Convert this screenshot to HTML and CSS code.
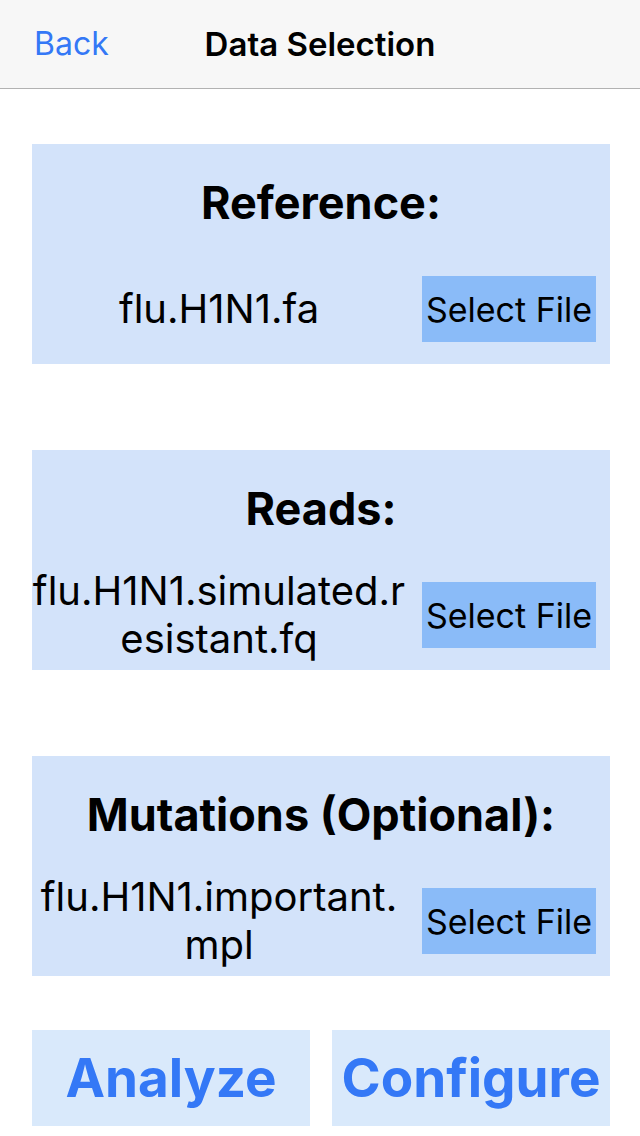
FILE: index.html
```html
<!DOCTYPE html>
<html>
<head>
<meta charset="utf-8">
<link rel="stylesheet" href="styles.css">
</head>
<body>
<div class="nav">
  <span class="back">Back</span>
  <span class="title">Data Selection</span>
</div>
<div class="content">
  <div class="panel">
    <div class="panel-title">Reference:</div>
    <div class="row">
      <div class="label">flu.H1N1.fa</div>
      <div class="select">Select File</div>
    </div>
  </div>
  <div class="panel">
    <div class="panel-title">Reads:</div>
    <div class="row">
      <div class="label">flu.H1N1.simulated.resistant.fq</div>
      <div class="select">Select File</div>
    </div>
  </div>
  <div class="panel">
    <div class="panel-title">Mutations (Optional):</div>
    <div class="row">
      <div class="label">flu.H1N1.important.mpl</div>
      <div class="select">Select File</div>
    </div>
  </div>
  <div class="actions">
    <div class="action">Analyze</div>
    <div class="action">Configure</div>
  </div>
</div>
</body>
</html>
```
FILE: styles.css
```css
html, body {
  margin: 0;
  padding: 0;
  background: #ffffff;
  font-family: Inter, "Noto Sans", sans-serif;
  color: #000;
}
.nav {
  height: 88px;
  background: #f7f7f7;
  border-bottom: 1px solid #b2b2b2;
  position: relative;
  display: flex;
  align-items: center;
  justify-content: center;
}
.back {
  position: absolute;
  left: 34px;
  top: 24px;
  font-size: 32px;
  color: #3478f6;
  line-height: 40px;
}
.title {
  font-size: 33px;
  font-weight: 600;
  line-height: 40px;
}
.content {
  padding: 55px 30px 0 32px;
  display: flex;
  flex-direction: column;
}
.panel {
  height: 220px;
  background: #d3e3fa;
  display: flex;
  flex-direction: column;
  margin-bottom: 86px;
}
.panel:nth-child(3) {
  margin-bottom: 54px;
}
.panel-title {
  height: 117px;
  display: flex;
  align-items: center;
  justify-content: center;
  font-size: 45px;
  font-weight: 700;
}
.row {
  height: 96px;
  display: flex;
  align-items: center;
}
.label {
  width: 374px;
  text-align: center;
  font-size: 40px;
  line-height: 48px;
  word-break: break-all;
}
.select {
  margin-left: 16px;
  width: 174px;
  height: 66px;
  background: #8abbf8;
  display: flex;
  align-items: center;
  justify-content: center;
  font-size: 34px;
  white-space: nowrap;
}
.actions {
  display: flex;
  gap: 22px;
}
.action {
  flex: 1;
  height: 96px;
  background: #d9e9fb;
  color: #3478f6;
  font-size: 53px;
  font-weight: 700;
  display: flex;
  align-items: center;
  justify-content: center;
}
```
